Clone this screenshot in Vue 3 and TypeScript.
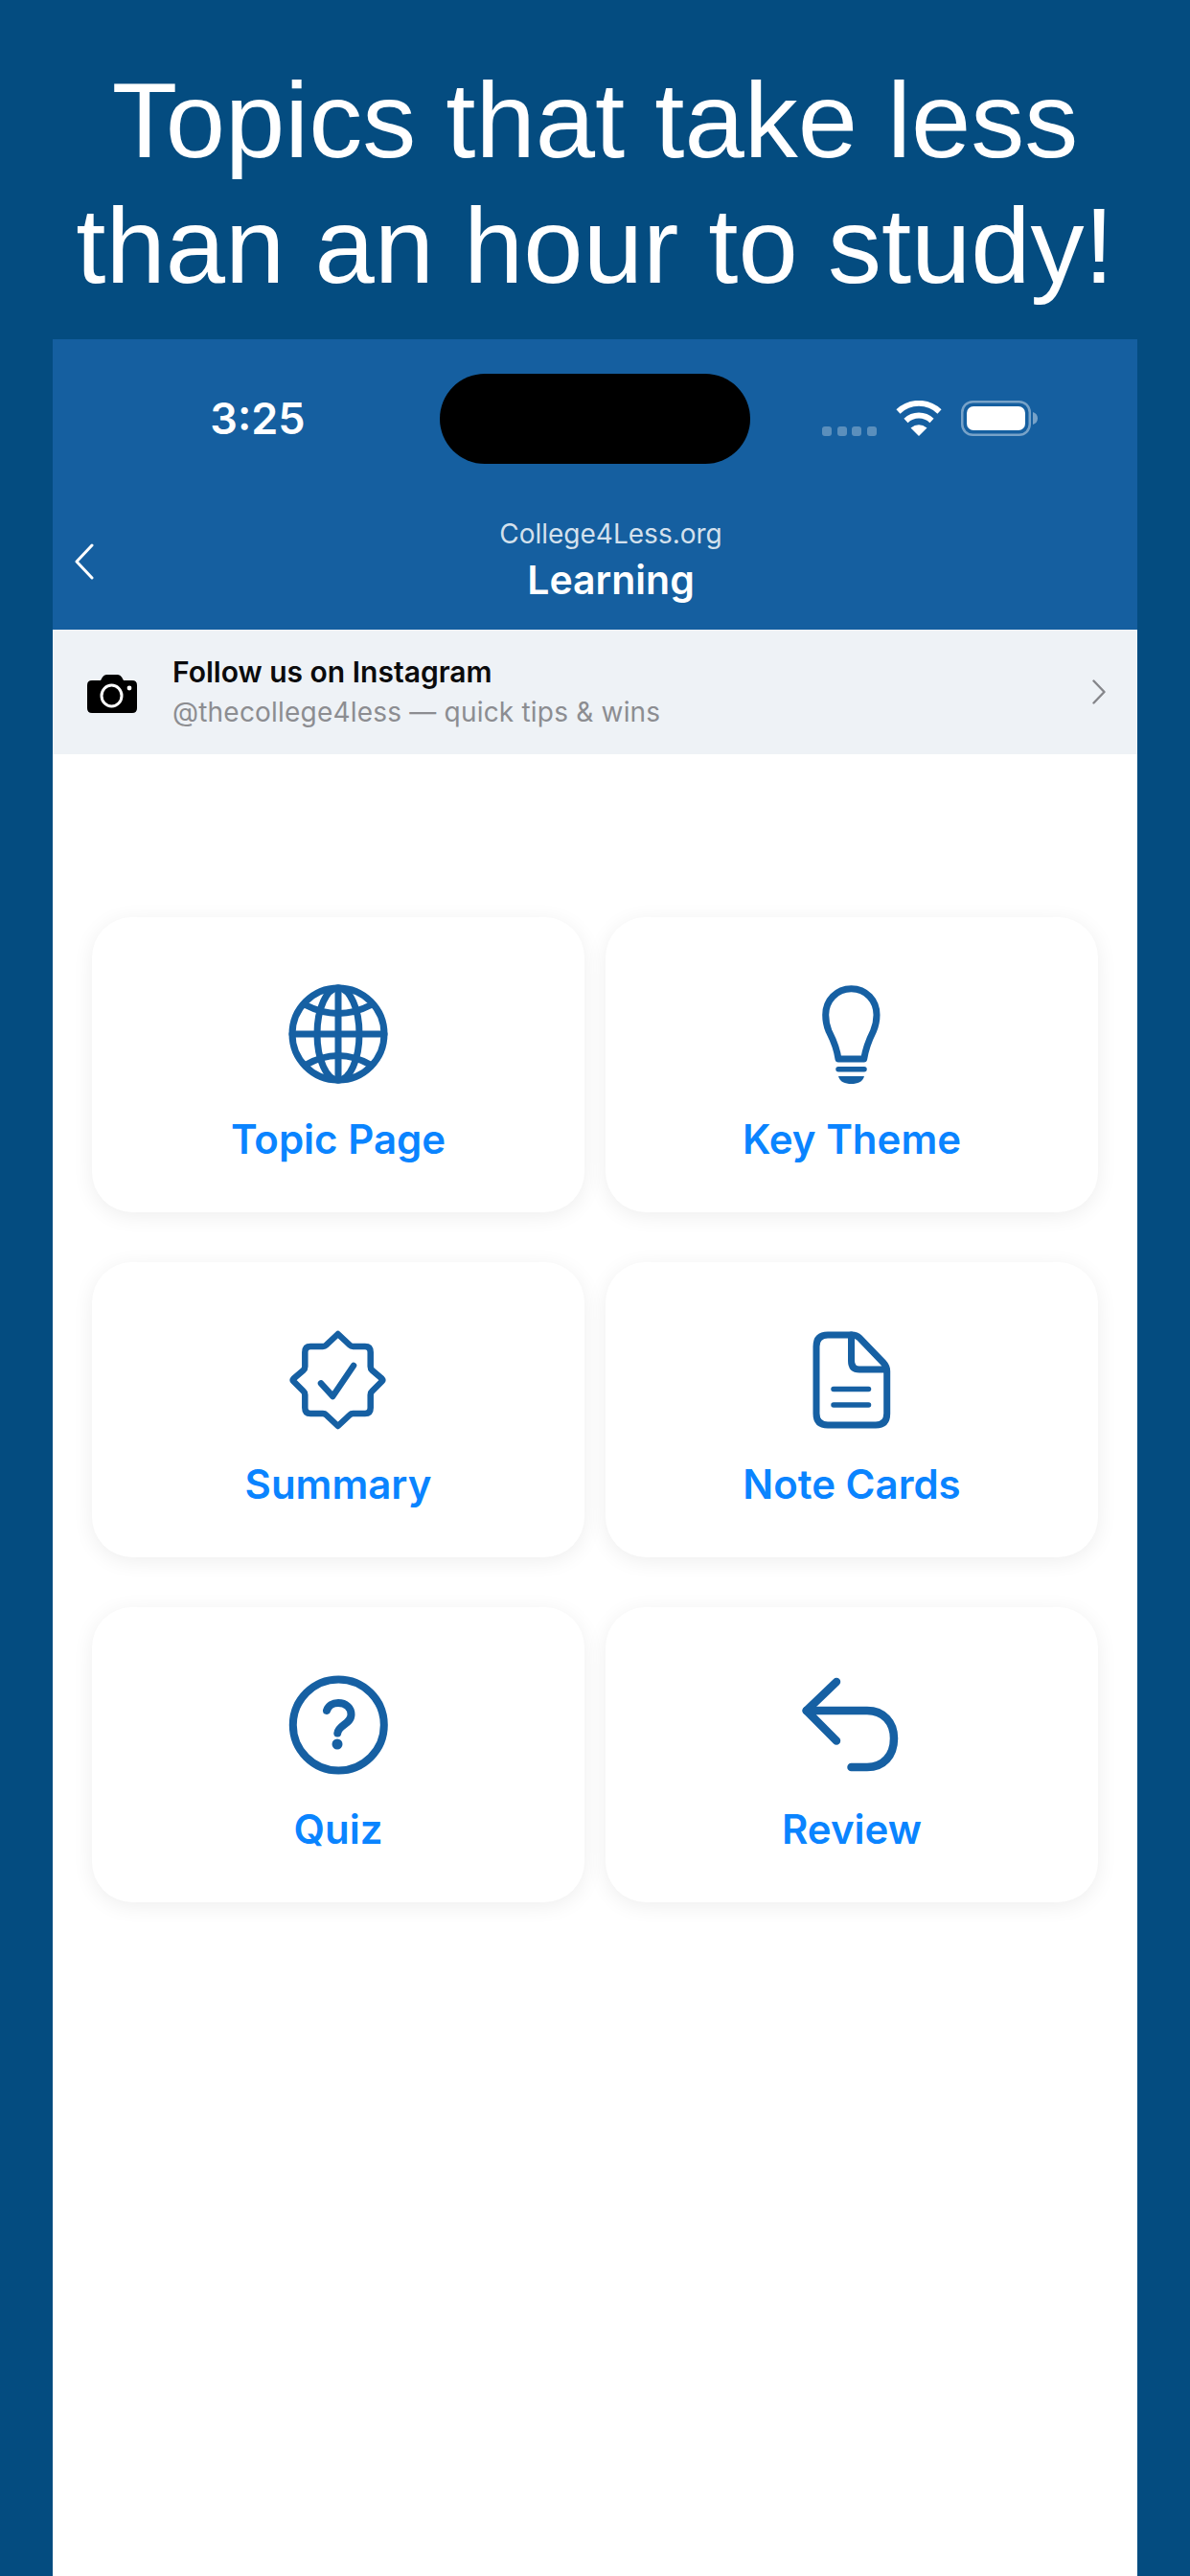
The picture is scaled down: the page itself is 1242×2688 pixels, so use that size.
<script setup lang="ts">
interface Tile {
  label: string
  icon: 'globe' | 'bulb' | 'badge' | 'doc' | 'quiz' | 'review'
}

const tiles: Tile[] = [
  { label: 'Topic Page', icon: 'globe' },
  { label: 'Key Theme', icon: 'bulb' },
  { label: 'Summary', icon: 'badge' },
  { label: 'Note Cards', icon: 'doc' },
  { label: 'Quiz', icon: 'quiz' },
  { label: 'Review', icon: 'review' }
]
</script>

<template>
  <div class="page">
    <h1 class="headline">Topics that take less<br />than an hour to study!</h1>

    <div class="phone">
      <header class="top">
        <div class="status">
          <span class="time">3:25</span>
          <div class="island"></div>
          <div class="indicators">
            <div class="dots"><i></i><i></i><i></i><i></i></div>
            <svg class="wifi" width="50" height="37" viewBox="0 0 50 37">
              <path d="M3.5 11.5A31 31 0 0 1 46.5 11.5" fill="none" stroke="#fff" stroke-width="6" />
              <path d="M11.5 21A19.5 19.5 0 0 1 38.5 21" fill="none" stroke="#fff" stroke-width="6" />
              <path d="M25 37L16.5 28.5Q25 22 33.5 28.5Z" fill="#fff" />
            </svg>
            <svg class="battery" width="80" height="37" viewBox="0 0 80 37">
              <rect x="1.25" y="1.25" width="70.5" height="34.5" rx="11" fill="none" stroke="#fff" stroke-opacity="0.42" stroke-width="2.5" />
              <rect x="6" y="6" width="61" height="25" rx="7" fill="#fff" />
              <path d="M75 12C78 13 80 15 80 18.5C80 22 78 24 75 25Z" fill="#fff" fill-opacity="0.42" />
            </svg>
          </div>
        </div>

        <nav class="nav">
          <svg class="back" width="20" height="38" viewBox="0 0 20 38">
            <path d="M18 2L2 19L18 36" fill="none" stroke="#fff" stroke-width="3" stroke-linecap="round" stroke-linejoin="round" />
          </svg>
          <div class="nav-text">
            <div class="nav-sub">College4Less.org</div>
            <div class="nav-title">Learning</div>
          </div>
        </nav>
      </header>

      <div class="banner">
        <svg class="camera" width="52" height="40" viewBox="0 0 52 40">
          <path d="M5 6H14L16 2.5Q17.5 0 20 0H32Q34.5 0 36 2.5L38 6H47Q52 6 52 11V35Q52 40 47 40H5Q0 40 0 35V11Q0 6 5 6Z" fill="#000" />
          <ellipse cx="25.5" cy="22" rx="10.5" ry="11" fill="none" stroke="#fff" stroke-width="3" />
          <circle cx="44" cy="14" r="2.4" fill="#fff" />
        </svg>
        <div class="banner-text">
          <div class="banner-title">Follow us on Instagram</div>
          <div class="banner-sub">@thecollege4less — quick tips &amp; wins</div>
        </div>
        <svg class="chevron" width="14" height="26" viewBox="0 0 14 26">
          <path d="M1.5 1.5L12.5 13L1.5 24.5" fill="none" stroke="#85868a" stroke-width="2.4" stroke-linecap="round" stroke-linejoin="round" />
        </svg>
      </div>

      <main class="grid">
        <div v-for="tile in tiles" :key="tile.label" class="tile">
          <svg class="tile-icon" width="120" height="120" viewBox="0 0 120 120" fill="none" stroke="#1660a3" stroke-width="7" stroke-linecap="round" stroke-linejoin="round">
            <template v-if="tile.icon === 'globe'">
              <circle cx="60" cy="60" r="48" />
              <ellipse cx="60" cy="60" rx="22" ry="48" />
              <path d="M60 12V108M12 60H108" />
              <path d="M25.5 29.5Q60 47.5 94.5 29.5M25.5 92.5Q60 72.5 94.5 92.5" />
            </template>
            <template v-else-if="tile.icon === 'bulb'">
              <path d="M46 86C44 72 40 65 36 57C33.5 51 32.7 46 32.7 40C32.7 25 44 12.7 59.5 12.7C75 12.7 86 25 86 40C86 46 85 51 82.5 57C78.5 65 75 72 72.7 86Z" />
              <path d="M46 96.7H73" stroke-width="5.5" />
              <path d="M46 104H73C71.5 110 66 112 59.5 112C53 112 47.5 110 46 104Z" fill="#1660a3" stroke="none" />
            </template>
            <template v-else-if="tile.icon === 'badge'">
              <path d="M59.7 13L47.5 24.5Q46 26 44 26H31Q25.3 26 25.3 32V47Q25.3 49.5 23.5 51L13.5 59.5Q12 61 13.5 62.5L23.5 72.5Q25.3 74 25.3 76.5V90Q25.3 96 31 96H44Q46 96 47.5 97.5L59.7 109L72 97.5Q73.5 96 75.5 96H88Q93.7 96 93.7 90V76.5Q93.7 74 95.5 72.5L105.5 62.5Q107 61 105.5 59.5L95.5 51Q93.7 49.5 93.7 47V32Q93.7 26 88 26H75.5Q73.5 26 72 24.5Z" stroke-width="6.5" />
              <path d="M42 64.5L54.3 78L76 46" stroke-width="6.5" />
            </template>
            <template v-else-if="tile.icon === 'doc'">
              <path d="M35 14H60Q65 14 68 17L93 43Q96.7 47 96.7 52V96Q96.7 108 85 108H35Q23 108 23 96V26Q23 14 35 14Z" />
              <path d="M59.5 14V41Q59.5 50 68 50H96" />
              <path d="M41 70.5H77.5M41 87H77.5" stroke-width="5.5" />
            </template>
            <template v-else-if="tile.icon === 'quiz'">
              <circle cx="60.3" cy="61" r="47.5" stroke-width="8" />
              <path d="M48 46C49.5 41 54 38 60 38C68 38 73.5 43 73.5 50C73.5 60 60 61 59.3 69.5" stroke-width="8" />
              <circle cx="59" cy="81" r="5.5" fill="#1660a3" stroke="none" />
            </template>
            <template v-else>
              <path d="M44 16L12.7 46L44 77.5" stroke-width="8.5" />
              <path d="M12.7 46H76C93 46 104 58 104 75C104 93 93 105 76 105H59.5" stroke-width="8.5" />
            </template>
          </svg>
          <span class="tile-label">{{ tile.label }}</span>
        </div>
      </main>
    </div>
  </div>
</template>

<style scoped>
.page {
  height: 2688px;
  overflow: hidden;
  background: #044c80;
  display: flex;
  flex-direction: column;
}

.headline {
  margin: 0;
  padding: 60px 0 32px;
  font-family: 'Liberation Sans', Arial, sans-serif;
  font-size: 112px;
  line-height: 131px;
  font-weight: 400;
  color: #fff;
  text-align: center;
  white-space: nowrap;
}

.phone {
  flex: 1;
  margin: 0 55px;
  background: #fff;
  font-family: Inter, 'Liberation Sans', sans-serif;
}

.top {
  height: 303px;
  background: #155fa0;
  color: #fff;
}

.status {
  display: flex;
  align-items: flex-start;
  padding: 36px 0 0 24px;
}

.time {
  width: 380px;
  height: 94px;
  line-height: 94px;
  text-align: center;
  font-size: 45px;
  font-weight: 600;
}

.island {
  width: 324px;
  height: 94px;
  border-radius: 47px;
  background: #000;
}

.indicators {
  display: flex;
  align-items: flex-end;
  gap: 19px;
  margin: 28px 0 0 75px;
}

.dots {
  display: flex;
  gap: 5.5px;
}

.dots i {
  width: 10px;
  height: 10px;
  border-radius: 3px;
  background: rgba(255, 255, 255, 0.3);
}

.wifi,
.battery {
  display: block;
}

.nav {
  display: flex;
  align-items: flex-start;
  padding: 56px 10px 0 23px;
}

.back {
  margin-top: 27px;
  flex-shrink: 0;
}

.nav-text {
  flex: 1;
  text-align: center;
}

.nav-sub {
  font-size: 28px;
  line-height: 34px;
  color: rgba(255, 255, 255, 0.82);
}

.nav-title {
  margin-top: 6px;
  font-size: 41px;
  line-height: 50px;
  font-weight: 600;
}

.banner {
  height: 130px;
  display: flex;
  align-items: center;
  padding: 0 33px 0 36px;
  background: #eef2f6;
}

.camera {
  flex-shrink: 0;
  margin-top: 4px;
}

.banner-text {
  flex: 1;
  margin-left: 37px;
}

.banner-title {
  font-size: 30px;
  line-height: 40px;
  font-weight: 600;
  color: #0b0b0c;
}

.banner-sub {
  margin-top: 2px;
  font-size: 28px;
  line-height: 40px;
  letter-spacing: 0.2px;
  color: #8c8d91;
}

.grid {
  display: grid;
  grid-template-columns: 1fr 1fr;
  gap: 52px 22px;
  padding: 170px 41px 0;
}

.tile {
  height: 308px;
  box-sizing: border-box;
  padding-top: 62px;
  display: flex;
  flex-direction: column;
  align-items: center;
  border-radius: 42px;
  background: #fff;
  box-shadow: 0 4px 22px rgba(0, 0, 0, 0.07);
}

.tile-icon {
  display: block;
}

.tile-label {
  margin-top: 24px;
  font-size: 42px;
  line-height: 52px;
  font-weight: 600;
  color: #0a84ff;
}
</style>
